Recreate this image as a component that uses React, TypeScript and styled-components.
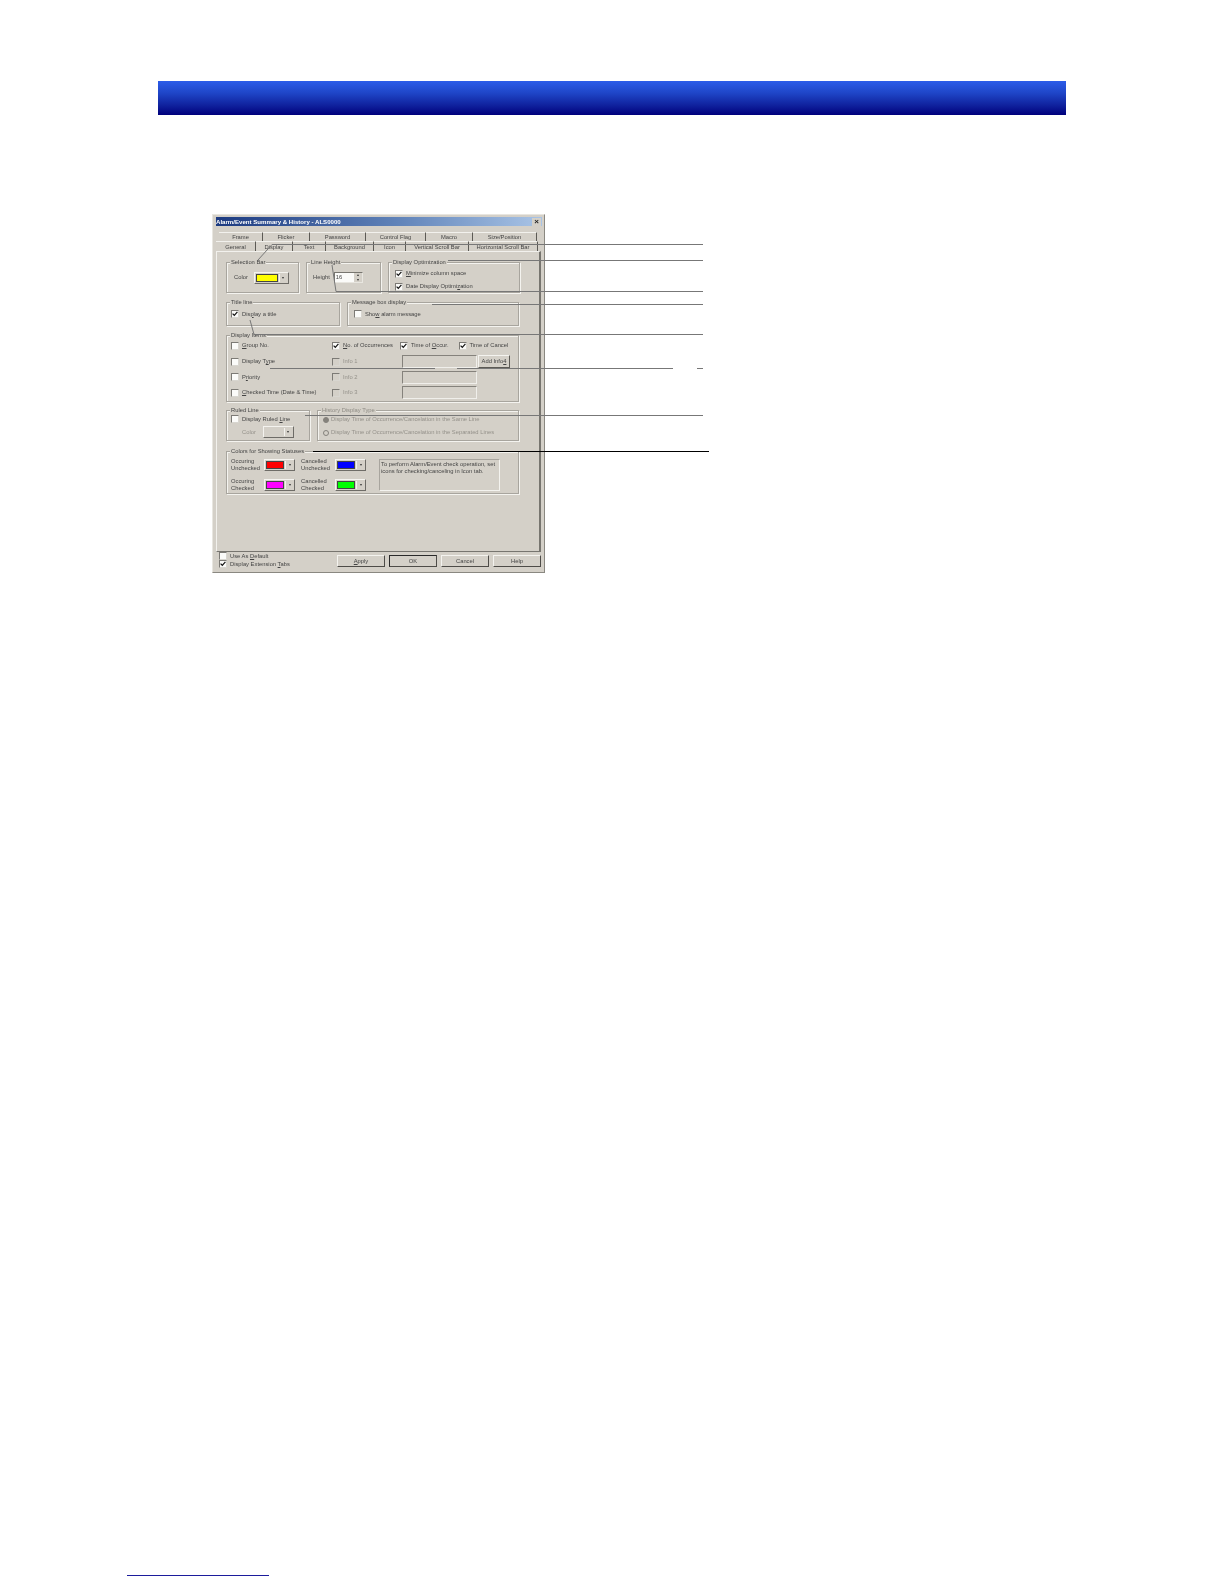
import { ReactNode } from "react";
import styled, { createGlobalStyle } from "styled-components";

const GlobalStyle = createGlobalStyle`
  html, body {
    margin: 0;
    padding: 0;
    background: #fff;
  }
`;

const Page = styled.div`
  position: relative;
  width: 1224px;
  height: 1584px;
  padding: 81px 0 8px 158px;
  box-sizing: border-box;
  display: flex;
  flex-direction: column;
  overflow: hidden;
  background: #fff;
  font-family: "Liberation Sans", Arial, sans-serif;
`;

const Banner = styled.div`
  width: 908px;
  height: 34px;
  flex: none;
  background: linear-gradient(180deg, #2b5ce9 0%, #1f46c8 35%, #10239f 70%, #00007c 100%);
`;

const FooterRule = styled.div`
  width: 142px;
  height: 1px;
  margin: auto 0 0 -31px;
  background: #1c1c9c;
`;

const Dialog = styled.div`
  width: 333px;
  height: 359px;
  flex: none;
  margin: 99px 0 0 54px;
  padding: 2px 4px 0 3px;
  box-sizing: border-box;
  background: #d4d0c8;
  border: 1px solid #8a8881;
  border-top-color: #e8e6e0;
  border-left-color: #e8e6e0;
  color: #444;
  font-size: 5.8px;
  line-height: 7px;
  filter: blur(0.45px);
`;

const TitleBar = styled.div`
  height: 9px;
  margin-right: -2px;
  padding: 0 1px 0 0;
  display: flex;
  align-items: center;
  justify-content: space-between;
  background: linear-gradient(90deg, #1c3a80 0%, #5f82b8 55%, #a9c4e6 100%);
  color: #fff;
  font-weight: 700;
  font-size: 6.1px;
`;

const CloseBox = styled.span`
  width: 9px;
  height: 8px;
  display: flex;
  align-items: center;
  justify-content: center;
  background: #d4d0c8;
  color: #222;
  font-size: 8px;
  line-height: 8px;
`;

const TabRow = styled.div<{ $top: number; $left: number }>`
  display: flex;
  height: 10px;
  margin-top: ${(p) => p.$top}px;
  margin-left: ${(p) => p.$left}px;
`;

const Tab = styled.div<{ $w: number; $active?: boolean; $low?: boolean }>`
  width: ${(p) => p.$w}px;
  flex: none;
  box-sizing: border-box;
  display: flex;
  align-items: center;
  justify-content: center;
  padding-top: ${(p) => (p.$low ? 2 : 0)}px;
  border-top: 1px solid #f2f1ed;
  border-right: 1px solid #5c5a55;
  background: ${(p) => (p.$active ? "#d8d4cc" : "#d4d0c8")};
  white-space: nowrap;
`;

const TabPanel = styled.div`
  width: 325px;
  height: 301px;
  box-sizing: border-box;
  padding: 10px 0 0 9px;
  border: 1px solid #f2f1ed;
  border-right: 2px solid #77756f;
  border-bottom: 1px solid #77756f;
`;

const GroupRow = styled.div<{ $top?: number }>`
  display: flex;
  gap: 7px;
  margin-top: ${(p) => p.$top ?? 0}px;
`;

const Group = styled.div<{ $w: number; $h: number }>`
  position: relative;
  width: ${(p) => p.$w}px;
  height: ${(p) => p.$h}px;
  flex: none;
  box-sizing: border-box;
  border: 1px solid #a8a59e;
  box-shadow: 1px 1px 0 #f4f3ef, inset 1px 1px 0 #f4f3ef;
`;

const Legend = styled.span<{ $dim?: boolean }>`
  position: absolute;
  top: -4px;
  left: 3px;
  padding: 0 1px;
  background: #d4d0c8;
  white-space: nowrap;
  color: ${(p) => (p.$dim ? "#8e8b84" : "inherit")};
`;

const InlineBody = styled.div<{ $left: number; $gap?: number }>`
  height: 100%;
  padding: 0 0 0 ${(p) => p.$left}px;
  box-sizing: border-box;
  display: flex;
  align-items: center;
  gap: ${(p) => p.$gap ?? 4}px;
`;

const StackBody = styled.div`
  height: 100%;
  padding: 5px 0 0 6px;
  box-sizing: border-box;
  display: flex;
  flex-direction: column;
  justify-content: center;
  gap: 5px;
`;

const BoxMark = styled.span`
  width: 8px;
  height: 8px;
  flex: none;
  box-sizing: border-box;
  display: inline-flex;
  align-items: center;
  justify-content: center;
  background: #fbfbf9;
  border: 1px solid #7c7a75;
  border-right-color: #d8d6d0;
  border-bottom-color: #d8d6d0;
`;

const CheckRow = styled.label<{ $dim?: boolean }>`
  display: inline-flex;
  align-items: center;
  gap: 3px;
  white-space: nowrap;
  color: ${(p) => (p.$dim ? "#94918a" : "inherit")};
  ${BoxMark} {
    background: ${(p) => (p.$dim ? "#d4d0c8" : "#fbfbf9")};
  }
`;

const Check = ({ on, dim, children }: { on?: boolean; dim?: boolean; children: ReactNode }) => (
  <CheckRow $dim={dim}>
    <BoxMark>
      {on && (
        <svg width="6" height="6" viewBox="0 0 6 6">
          <path d="M0.6 2.6 L2.3 4.4 L5.4 0.9" fill="none" stroke="#111" strokeWidth="1.2" />
        </svg>
      )}
    </BoxMark>
    <span>{children}</span>
  </CheckRow>
);

const RadioDot = styled.span<{ $on?: boolean }>`
  width: 6px;
  height: 6px;
  flex: none;
  box-sizing: border-box;
  border-radius: 50%;
  border: 1px solid #85827c;
  background: ${(p) => (p.$on ? "#85827c" : "#d4d0c8")};
`;

const RadioRow = styled.label`
  display: flex;
  align-items: center;
  gap: 2px;
  white-space: nowrap;
  color: #94918a;
`;

const ColorButton = styled.div<{ $w?: number }>`
  width: ${(p) => p.$w ?? 31}px;
  height: 12px;
  flex: none;
  box-sizing: border-box;
  display: flex;
  align-items: stretch;
  gap: 1px;
  padding: 1px;
  background: #d4d0c8;
  border: 1px solid #f4f3ef;
  border-right-color: #6e6c67;
  border-bottom-color: #6e6c67;
`;

const Swatch = styled.span<{ $color: string }>`
  flex: 1;
  background: ${(p) => p.$color};
  border: 1px solid #444;
`;

const BlankSwatch = styled.span`
  flex: 1;
`;

const Arrow = styled.span`
  width: 7px;
  flex: none;
  display: flex;
  align-items: center;
  justify-content: center;
  border-left: 1px solid #f4f3ef;
  &::after {
    content: "";
    border: 1.5px solid transparent;
    border-top: 2px solid #333;
    border-bottom: 0;
  }
`;

const ColorPick = ({ color, w }: { color?: string; w?: number }) => (
  <ColorButton $w={w}>
    {color ? <Swatch $color={color} /> : <BlankSwatch />}
    <Arrow />
  </ColorButton>
);

const SpinWrap = styled.div`
  width: 29px;
  height: 11px;
  box-sizing: border-box;
  display: flex;
  align-items: center;
  justify-content: space-between;
  padding-left: 1px;
  background: #fbfbf9;
  border: 1px solid #77756f;
  border-right-color: #e8e6e0;
  border-bottom-color: #e8e6e0;
`;

const SpinArrows = styled.span`
  width: 8px;
  height: 9px;
  display: flex;
  flex-direction: column;
  align-items: center;
  justify-content: space-around;
  background: #d4d0c8;
  &::before {
    content: "";
    border: 1.5px solid transparent;
    border-bottom: 2px solid #333;
    border-top: 0;
  }
  &::after {
    content: "";
    border: 1.5px solid transparent;
    border-top: 2px solid #333;
    border-bottom: 0;
  }
`;

const ItemsGrid = styled.div`
  display: grid;
  grid-template-columns: 101px 68px 75px 36px;
  grid-auto-rows: 15.7px;
  padding: 2px 0 0 4px;
  align-items: center;
`;

const WideCell = styled.div`
  grid-column: span 2;
  display: flex;
  gap: 10px;
`;

const InfoField = styled.div`
  width: 75px;
  height: 13px;
  margin-left: 2px;
  box-sizing: border-box;
  border: 1px solid #85827c;
  border-right-color: #f0efeb;
  border-bottom-color: #f0efeb;
`;

const AddInfoButton = styled.div`
  width: 32px;
  height: 13px;
  margin-left: 3px;
  box-sizing: border-box;
  display: flex;
  align-items: center;
  justify-content: center;
  white-space: nowrap;
  border: 1px solid #f4f3ef;
  border-right-color: #5c5a55;
  border-bottom-color: #5c5a55;
`;

const RuledBody = styled.div`
  display: flex;
  flex-direction: column;
  gap: 3px;
  padding: 4px 0 0 4px;
`;

const DisabledColor = styled.div`
  display: flex;
  align-items: center;
  gap: 7px;
  padding-left: 11px;
  color: #94918a;
`;

const HistoryBody = styled.div`
  display: flex;
  flex-direction: column;
  gap: 6px;
  padding: 5px 0 0 5px;
`;

const StatusGrid = styled.div`
  display: grid;
  grid-template-columns: 33px 37px 34px 44px 121px;
  grid-template-rows: 12px 12px;
  row-gap: 8px;
  padding: 7px 0 0 4px;
  align-items: center;
`;

const StatusLabel = styled.div`
  line-height: 6.6px;
`;

const NoteBox = styled.div`
  grid-column: 5;
  grid-row: 1 / span 2;
  height: 32px;
  box-sizing: border-box;
  padding: 1px 1px;
  line-height: 6.8px;
  border: 1px solid #a8a59e;
  border-right-color: #f4f3ef;
  border-bottom-color: #f4f3ef;
`;

const DialogFooter = styled.div`
  display: flex;
  justify-content: space-between;
  align-items: flex-start;
  height: 16px;
  padding: 3px 0 0 3px;
  width: 325px;
  box-sizing: border-box;
`;

const DefaultChecks = styled.div`
  display: flex;
  flex-direction: column;
  margin-top: -3px;
`;

const ButtonRow = styled.div`
  display: flex;
  gap: 4px;
`;

const PushButton = styled.div<{ $default?: boolean }>`
  width: 48px;
  height: 12px;
  box-sizing: border-box;
  display: flex;
  align-items: center;
  justify-content: center;
  border: 1px solid ${(p) => (p.$default ? "#2a2a2a" : "#f4f3ef")};
  border-right-color: #4e4c48;
  border-bottom-color: #4e4c48;
`;

const Leaders = styled.svg`
  position: absolute;
  top: 0;
  left: 0;
  pointer-events: none;
`;

const topTabs = [
  { label: "Frame", w: 44 },
  { label: "Flicker", w: 47 },
  { label: "Password", w: 56 },
  { label: "Control Flag", w: 60 },
  { label: "Macro", w: 47 },
  { label: "Size/Position", w: 64 },
];

const bottomTabs = [
  { label: "General", w: 40 },
  { label: "Display", w: 37, active: true },
  { label: "Text", w: 33 },
  { label: "Background", w: 48 },
  { label: "Icon", w: 32 },
  { label: "Vertical Scroll Bar", w: 63 },
  { label: "Horizontal Scroll Bar", w: 69 },
];

const leaderLines = [
  "M258 260 L272 244.5 H703",
  "M448 260.5 H703",
  "M332 265 L336 291.5 H703",
  "M432 304.5 H703",
  "M250 320 L254 334.5 H703",
  "M270 368.5 H435 M457 368.5 H673 M697 368.5 H703",
  "M305 415.5 H703",
];

export default function App() {
  return (
    <Page>
      <GlobalStyle />
      <Banner />
      <Dialog>
        <TitleBar>
          <span>Alarm/Event Summary &amp; History - ALS0000</span>
          <CloseBox>×</CloseBox>
        </TitleBar>
        <TabRow $top={6} $left={3}>
          {topTabs.map((t) => (
            <Tab key={t.label} $w={t.w}>
              {t.label}
            </Tab>
          ))}
        </TabRow>
        <TabRow $top={-1} $left={0}>
          {bottomTabs.map((t) => (
            <Tab key={t.label} $w={t.w} $active={t.active} $low>
              {t.label}
            </Tab>
          ))}
        </TabRow>
        <TabPanel>
          <GroupRow>
            <Group $w={73} $h={31}>
              <Legend>Selection Bar</Legend>
              <InlineBody $left={7} $gap={6}>
                <span>Color</span>
                <ColorPick color="#ffff00" w={35} />
              </InlineBody>
            </Group>
            <Group $w={75} $h={31}>
              <Legend>Line Height</Legend>
              <InlineBody $left={6} $gap={4}>
                <span>Height</span>
                <SpinWrap>
                  <span>16</span>
                  <SpinArrows />
                </SpinWrap>
              </InlineBody>
            </Group>
            <Group $w={132} $h={31}>
              <Legend>Display Optimization</Legend>
              <StackBody>
                <Check on>
                  <u>M</u>inimize column space
                </Check>
                <Check on>
                  Date Display Optimi<u>z</u>ation
                </Check>
              </StackBody>
            </Group>
          </GroupRow>
          <GroupRow $top={9}>
            <Group $w={114} $h={24}>
              <Legend>Title line</Legend>
              <InlineBody $left={4}>
                <Check on>
                  Dis<u>p</u>lay a title
                </Check>
              </InlineBody>
            </Group>
            <Group $w={172} $h={24}>
              <Legend>Message box display</Legend>
              <InlineBody $left={6}>
                <Check>
                  Sho<u>w</u> alarm message
                </Check>
              </InlineBody>
            </Group>
          </GroupRow>
          <GroupRow $top={9}>
            <Group $w={293} $h={67}>
              <Legend>Display Items</Legend>
              <ItemsGrid>
                <Check>
                  <u>G</u>roup No.
                </Check>
                <Check on>
                  <u>N</u>o. of Occurrences
                </Check>
                <WideCell>
                  <Check on>
                    Time of <u>O</u>ccur.
                  </Check>
                  <Check on>Time of Cancel</Check>
                </WideCell>
                <Check>
                  Display T<u>y</u>pe
                </Check>
                <Check dim>Info 1</Check>
                <InfoField />
                <AddInfoButton>
                  Add Info<u>4</u>
                </AddInfoButton>
                <Check>
                  P<u>r</u>iority
                </Check>
                <Check dim>Info 2</Check>
                <InfoField />
                <span />
                <Check>
                  <u>C</u>hecked Time (Date &amp; Time)
                </Check>
                <Check dim>Info 3</Check>
                <InfoField />
              </ItemsGrid>
            </Group>
          </GroupRow>
          <GroupRow $top={8}>
            <Group $w={84} $h={31}>
              <Legend>Ruled Line</Legend>
              <RuledBody>
                <Check>
                  Display Ruled <u>L</u>ine
                </Check>
                <DisabledColor>
                  <span>Color</span>
                  <ColorPick />
                </DisabledColor>
              </RuledBody>
            </Group>
            <Group $w={202} $h={31}>
              <Legend $dim>History Display Type</Legend>
              <HistoryBody>
                <RadioRow>
                  <RadioDot $on />
                  Display Time of Occurrence/Cancelation in the Same Line
                </RadioRow>
                <RadioRow>
                  <RadioDot />
                  Display Time of Occurrence/Cancelation in the Separated Lines
                </RadioRow>
              </HistoryBody>
            </Group>
          </GroupRow>
          <GroupRow $top={10}>
            <Group $w={293} $h={43}>
              <Legend>Colors for Showing Statuses</Legend>
              <StatusGrid>
                <StatusLabel>
                  Occuring
                  <br />
                  Unchecked
                </StatusLabel>
                <ColorPick color="#ff0000" />
                <StatusLabel>
                  Cancelled
                  <br />
                  Unchecked
                </StatusLabel>
                <ColorPick color="#0000ff" />
                <NoteBox>
                  To perform Alarm/Event check operation, set
                  <br />
                  icons for checking/canceling in Icon tab.
                </NoteBox>
                <StatusLabel>
                  Occuring
                  <br />
                  Checked
                </StatusLabel>
                <ColorPick color="#ff00ff" />
                <StatusLabel>
                  Cancelled
                  <br />
                  Checked
                </StatusLabel>
                <ColorPick color="#00ff00" />
              </StatusGrid>
            </Group>
          </GroupRow>
        </TabPanel>
        <DialogFooter>
          <DefaultChecks>
            <Check>
              Use As <u>D</u>efault
            </Check>
            <Check on>
              Display Extension <u>T</u>abs
            </Check>
          </DefaultChecks>
          <ButtonRow>
            <PushButton>
              <u>A</u>pply
            </PushButton>
            <PushButton $default>OK</PushButton>
            <PushButton>Cancel</PushButton>
            <PushButton>Help</PushButton>
          </ButtonRow>
        </DialogFooter>
      </Dialog>
      <FooterRule />
      <Leaders width="1224" height="1584" viewBox="0 0 1224 1584">
        {leaderLines.map((d) => (
          <path key={d} d={d} fill="none" stroke="#777" strokeWidth="1" />
        ))}
        <path d="M313 451.5 H709" fill="none" stroke="#000" strokeWidth="1" />
      </Leaders>
    </Page>
  );
}
